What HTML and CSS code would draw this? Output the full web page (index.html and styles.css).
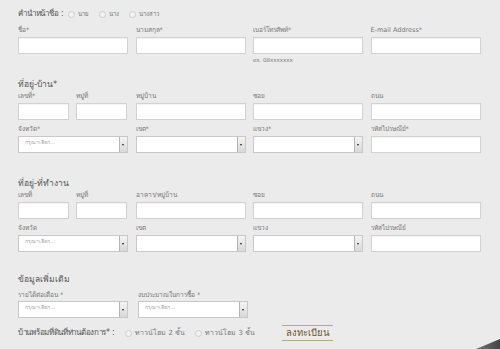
FILE: index.html
```html
<!DOCTYPE html>
<html lang="th">
<head>
<meta charset="utf-8">
<link rel="stylesheet" href="styles.css">
</head>
<body>
<div class="page">
  <form class="form">
    <div class="title-row">
      <span class="title">คำนำหน้าชื่อ :</span>
      <span class="radio"><span class="dot"></span>นาย</span>
      <span class="radio"><span class="dot"></span>นาง</span>
      <span class="radio"><span class="dot"></span>นางสาว</span>
    </div>

    <div class="grid first">
      <div class="field"><label>ชื่อ*</label><span class="input"></span></div>
      <div class="field"><label>นามสกุล*</label><span class="input"></span></div>
      <div class="field"><label>เบอร์โทรศัพท์*</label><span class="input"></span><span class="hint">ex. 08xxxxxxx</span></div>
      <div class="field"><label>E-mail Address*</label><span class="input"></span></div>
    </div>

    <h3 class="heading h-home">ที่อยู่-บ้าน*</h3>
    <div class="grid">
      <div class="pair">
        <div class="field"><label>เลขที่*</label><span class="input"></span></div>
        <div class="field"><label>หมู่ที่</label><span class="input"></span></div>
      </div>
      <div class="field"><label>หมู่บ้าน</label><span class="input"></span></div>
      <div class="field"><label>ซอย</label><span class="input"></span></div>
      <div class="field"><label>ถนน</label><span class="input"></span></div>
    </div>
    <div class="grid next">
      <div class="field"><label>จังหวัด*</label><span class="select"><span class="ph">กรุณาเลือก...</span><span class="arrow"></span></span></div>
      <div class="field"><label>เขต*</label><span class="select"><span class="ph"></span><span class="arrow"></span></span></div>
      <div class="field"><label>แขวง*</label><span class="select"><span class="ph"></span><span class="arrow"></span></span></div>
      <div class="field"><label>รหัสไปรษณีย์*</label><span class="input"></span></div>
    </div>

    <h3 class="heading h-work">ที่อยู่-ที่ทำงาน</h3>
    <div class="grid">
      <div class="pair">
        <div class="field"><label>เลขที่</label><span class="input"></span></div>
        <div class="field"><label>หมู่ที่</label><span class="input"></span></div>
      </div>
      <div class="field"><label>อาคาร/หมู่บ้าน</label><span class="input"></span></div>
      <div class="field"><label>ซอย</label><span class="input"></span></div>
      <div class="field"><label>ถนน</label><span class="input"></span></div>
    </div>
    <div class="grid next">
      <div class="field"><label>จังหวัด</label><span class="select"><span class="ph">กรุณาเลือก...</span><span class="arrow"></span></span></div>
      <div class="field"><label>เขต</label><span class="select"><span class="ph"></span><span class="arrow"></span></span></div>
      <div class="field"><label>แขวง</label><span class="select"><span class="ph"></span><span class="arrow"></span></span></div>
      <div class="field"><label>รหัสไปรษณีย์</label><span class="input"></span></div>
    </div>

    <h3 class="heading h-extra">ข้อมูลเพิ่มเติม</h3>
    <div class="grid g2">
      <div class="field tight"><label>รายได้ต่อเดือน *</label><span class="select"><span class="ph">กรุณาเลือก...</span><span class="arrow"></span></span></div>
      <div class="field tight"><label>งบประมาณในการซื้อ *</label><span class="select"><span class="ph">กรุณาเลือก...</span><span class="arrow"></span></span></div>
    </div>

    <div class="house-row">
      <span class="title">บ้านพร้อมที่ดินที่ท่านต้องการ* :</span>
      <span class="radio"><span class="dot"></span>ทาวน์โฮม 2 ชั้น</span>
      <span class="radio"><span class="dot"></span>ทาวน์โฮม 3 ชั้น</span>
      <span class="submit">ลงทะเบียน</span>
    </div>
  </form>
  <span class="corner"></span>
</div>
</body>
</html>
```

FILE: styles.css
```css
html, body {
  margin: 0;
  padding: 0;
}
body {
  background: #ebebeb;
  font-family: Tahoma, "DejaVu Sans", "Noto Sans", sans-serif;
  color: #555;
}
.page {
  position: relative;
  width: 500px;
  height: 349px;
  overflow: hidden;
}
.form {
  padding: 9px 0 0 18px;
}
.title-row, .house-row {
  display: flex;
  align-items: center;
  height: 10px;
  line-height: 10px;
}
.title {
  color: #555;
  font-size: 8px;
  letter-spacing: -0.2px;
  margin-right: 5px;
}
.radio {
  display: inline-flex;
  align-items: center;
  font-size: 6px;
  color: #777;
  margin-right: 10px;
}
.dot {
  width: 5px;
  height: 5px;
  border-radius: 50%;
  border: 1px solid #cdcdcd;
  background: #f2f2f2;
  margin-right: 3px;
}
.grid {
  display: grid;
  grid-template-columns: repeat(4, 110px);
  column-gap: 7.5px;
}
.pair {
  display: grid;
  grid-template-columns: 51px 51px;
  column-gap: 7px;
}
.g2 {
  grid-template-columns: 109px 109px;
  column-gap: 11px;
}
.first { margin-top: 6px; }
.next { margin-top: 4px; }
.field {
  display: flex;
  flex-direction: column;
}
.field label {
  font-size: 6.5px;
  line-height: 10px;
  height: 10px;
  color: #777;
  margin-bottom: 2px;
  white-space: nowrap;
}
.field.tight label { margin-bottom: 1px; }
.input {
  display: block;
  height: 15px;
  background: #fff;
  border: 1px solid #d2d2d2;
  box-shadow: inset 0 1px 1px rgba(0,0,0,0.05);
}
.hint {
  font-size: 5.5px;
  line-height: 10px;
  color: #777;
  margin-top: 1px;
}
.select {
  display: flex;
  align-items: stretch;
  height: 15px;
  background: #fff;
  border: 1px solid #c8c8c8;
  width: 108px;
}
.ph {
  flex: 1;
  font-size: 5px;
  line-height: 10px;
  color: #a0a0a0;
  padding-left: 6px;
}
.arrow {
  position: relative;
  width: 7px;
  background: linear-gradient(#f4f4f4, #d8d8d8);
  border-left: 1px solid #b5b5b5;
}
.arrow::after {
  content: "";
  position: absolute;
  left: 2px;
  top: 7px;
  border-left: 1.5px solid transparent;
  border-right: 1.5px solid transparent;
  border-top: 2px solid #222;
}
.heading {
  margin: 0;
  font-weight: normal;
  font-size: 8.5px;
  line-height: 12px;
  height: 12px;
  color: #555;
}
.h-home { margin-top: 13px; margin-bottom: 1px; }
.h-work { margin-top: 24px; margin-bottom: 1px; }
.h-extra { margin-top: 21px; margin-bottom: 5px; }
.house-row {
  margin-top: 9px;
  height: 12px;
}
.house-row .title { font-size: 8px; letter-spacing: -0.3px; margin-right: 11px; }
.house-row .radio { font-size: 7px; margin-right: 10px; }
.submit {
  margin-left: 17px;
  padding: 3px 4px;
  border-top: 1px solid #b8a985;
  border-bottom: 1px solid #b8a985;
  color: #6b5426;
  font-size: 9.5px;
  line-height: 8px;
}
.corner {
  position: absolute;
  right: 0;
  bottom: 0;
  width: 24px;
  height: 10px;
  background: linear-gradient(90deg, #777, #444);
  clip-path: polygon(0 100%, 100% 0, 100% 100%);
}
```
